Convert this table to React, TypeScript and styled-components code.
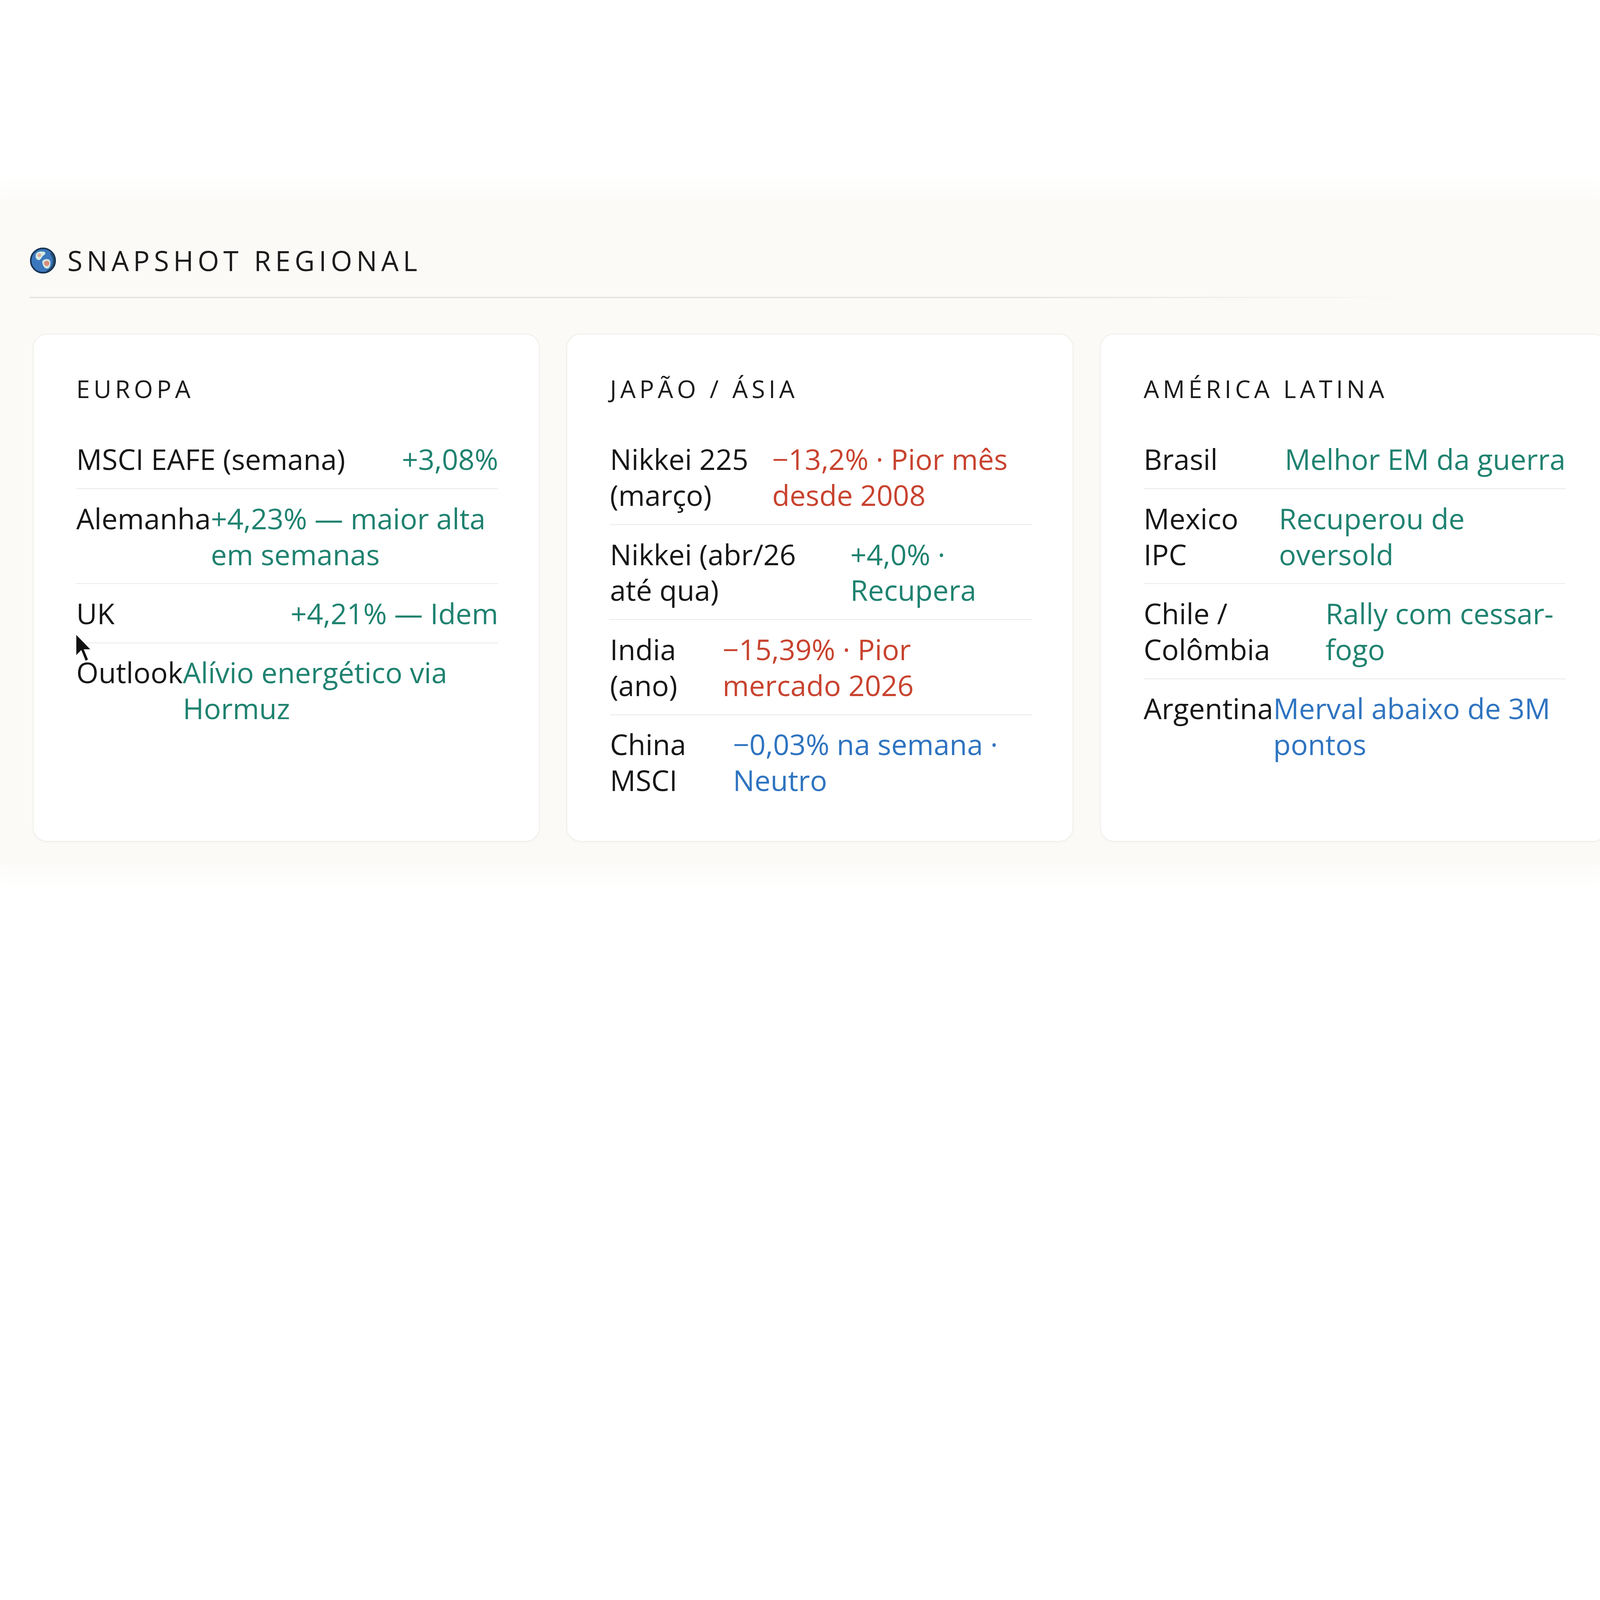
import React, { useEffect, useState } from 'react'
import styled, { createGlobalStyle } from 'styled-components'

type Tone = 'up' | 'down' | 'flat'

type Item = {
  label: string
  value: string
  tone: Tone
}

type Region = {
  title: string
  items: Item[]
}

// largura de referência do layout, a página é escalada para a janela
const BASE_WIDTH = 1568

const regions: Region[] = [
  {
    title: 'EUROPA',
    items: [
      { label: 'MSCI EAFE (semana)', value: '+3,08%', tone: 'up' },
      { label: 'Alemanha', value: '+4,23% — maior alta em semanas', tone: 'up' },
      { label: 'UK', value: '+4,21% — Idem', tone: 'up' },
      { label: 'Outlook', value: 'Alívio energético via Hormuz', tone: 'up' },
    ],
  },
  {
    title: 'JAPÃO / ÁSIA',
    items: [
      { label: 'Nikkei 225 (março)', value: '−13,2% · Pior mês desde 2008', tone: 'down' },
      { label: 'Nikkei (abr/26 até\u00a0qua)', value: '+4,0% · Recupera', tone: 'up' },
      { label: 'India (ano)', value: '−15,39% · Pior mercado 2026', tone: 'down' },
      { label: 'China MSCI', value: '−0,03% na semana · Neutro', tone: 'flat' },
    ],
  },
  {
    title: 'AMÉRICA LATINA',
    items: [
      { label: 'Brasil', value: 'Melhor EM da guerra', tone: 'up' },
      { label: 'Mexico IPC', value: 'Recuperou de oversold', tone: 'up' },
      { label: 'Chile / Colômbia', value: 'Rally com cessar-fogo', tone: 'up' },
      { label: 'Argentina', value: 'Merval abaixo de 3M pontos', tone: 'flat' },
    ],
  },
]

const toneColor: Record<Tone, string> = {
  up: '#1f8270',
  down: '#c8432f',
  flat: '#2f74c0',
}

// globo do título
const Globe = () => (
  <svg width="26" height="26" viewBox="0 0 26 26">
    <circle cx="13" cy="13" r="12" fill="#3b77bd" stroke="#16324f" strokeWidth="1.5" />
    <path d="M20.5 6 A11 11 0 0 1 17 23.5" fill="none" stroke="#1c3a4a" strokeWidth="1.6" opacity="0.7" />
    <path
      d="M6 7 C7 4.5 11 3.5 14.5 4.5 C16 5.5 15.5 7 13.5 8 C12 9 11.5 11.5 9.5 12.5 C7.5 13 6 11 5.8 9.5 Z"
      fill="#d3ebe3"
    />
    <circle cx="9.4" cy="7.8" r="1.8" fill="#e6a08e" opacity="0.85" />
    <path
      d="M12.5 13.5 C14 11.5 17.5 11 19.5 12.5 C21 14.5 20.5 18.5 18.5 20.5 C16.5 21.5 14.5 20.5 13.5 18.5 C12.8 17 12 15 12.5 13.5 Z"
      fill="#cfe6de"
    />
    <circle cx="16.7" cy="15.8" r="2.6" fill="#de7a6a" opacity="0.85" />
  </svg>
)

export default function App() {
  const [scale, setScale] = useState(() => window.innerWidth / BASE_WIDTH)

  useEffect(() => {
    const onResize = () => setScale(window.innerWidth / BASE_WIDTH)
    window.addEventListener('resize', onResize)
    return () => window.removeEventListener('resize', onResize)
  }, [])

  return (
    <>
      <GlobalStyle />
      <Page style={{ zoom: scale }}>
        <Section>
          <Header>
            <Globe />
            <Heading>SNAPSHOT REGIONAL</Heading>
          </Header>
          <Divider />
          <Cards>
            {regions.map((region) => (
              <Card key={region.title}>
                <CardTitle>{region.title}</CardTitle>
                <List>
                  {region.items.map((item) => (
                    <Row key={item.label}>
                      <Label>{item.label}</Label>
                      <Value $tone={item.tone}>{item.value}</Value>
                    </Row>
                  ))}
                </List>
              </Card>
            ))}
          </Cards>
        </Section>
        {/* ponteiro do mouse que aparece na captura */}
        <Cursor viewBox="0 0 16 28">
          <path d="M1 1 L1 22 L6 17 L10 27 L13 25.5 L9 16 L15.5 16 Z" fill="#111" stroke="#fff" strokeWidth="0.8" />
        </Cursor>
      </Page>
    </>
  )
}

const GlobalStyle = createGlobalStyle`
  html, body {
    margin: 0;
    padding: 0;
    background: #ffffff;
    overflow: hidden;
  }
`

const Page = styled.div`
  position: relative;
  width: 1568px;
  height: 1045px;
  overflow: hidden;
  box-sizing: border-box;
  padding-top: 195px;
  background: #ffffff;
  font-family: 'Open Sans', 'Liberation Sans', sans-serif;
`

const Section = styled.section`
  height: 653px;
  box-sizing: border-box;
  padding: 47px 0 0 29px;
  background: #fbfaf7;
  box-shadow: 0 0 24px 8px #fbfaf7;
`

const Header = styled.div`
  display: flex;
  align-items: center;
  gap: 11px;
  height: 27px;
`

const Heading = styled.h2`
  margin: 0;
  font-size: 27px;
  line-height: 27px;
  font-weight: 400;
  letter-spacing: 4.1px;
  color: #1b1b1b;
`

const Divider = styled.div`
  margin-top: 22px;
  width: 1372px;
  height: 1px;
  background: linear-gradient(90deg, #e4e1dc 0%, #e4e1dc 70%, rgba(228, 225, 220, 0) 100%);
`

const Cards = styled.div`
  display: grid;
  grid-template-columns: repeat(3, 497px);
  gap: 26px;
  margin: 35px 0 0 3px;
`

const Card = styled.div`
  background: #ffffff;
  border: 1px solid #efede9;
  border-radius: 14px;
  padding: 37.5px 40px 31px 42px;
  box-shadow: 0 1px 3px rgba(0, 0, 0, 0.02);
`

const CardTitle = styled.h3`
  margin: 0 0 25px;
  font-size: 24px;
  line-height: 31px;
  font-weight: 400;
  letter-spacing: 3.6px;
  color: #1b1b1b;
`

const List = styled.ul`
  margin: 0;
  padding: 0;
  list-style: none;
`

const Row = styled.li`
  display: flex;
  justify-content: space-between;
  padding: 11px 0;
  font-size: 28px;
  line-height: 35.2px;
  border-bottom: 1px solid #ebe9e6;

  &:last-child {
    border-bottom: none;
  }
`

const Label = styled.span`
  color: #161616;
`

const Value = styled.span<{ $tone: Tone }>`
  color: ${(p) => toneColor[p.$tone]};
`

const Cursor = styled.svg`
  position: absolute;
  left: 73px;
  top: 620px;
  width: 17px;
  height: 29px;
`
